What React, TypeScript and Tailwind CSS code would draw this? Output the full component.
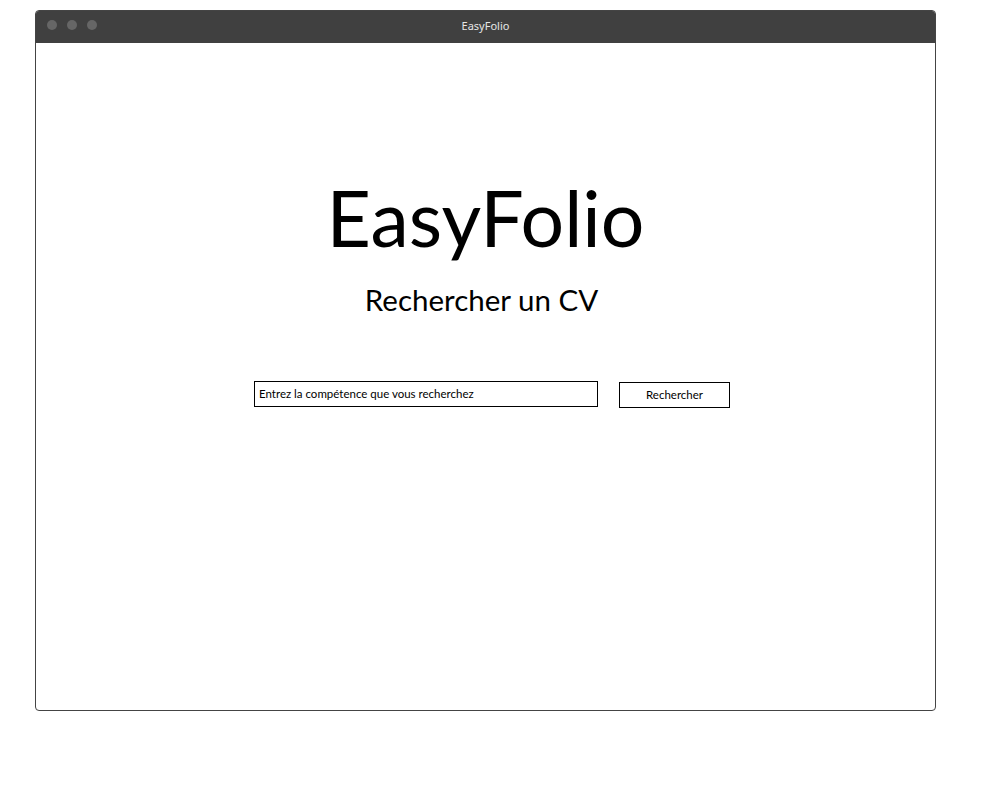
import React from 'react';

const TitleBar: React.FC = () => (
  <div className="relative flex h-[32px] items-center bg-[#404040]">
    <div className="flex gap-[10px] pl-[11px] pb-[4px]">
      <span className="h-[10px] w-[10px] rounded-full bg-[#666666]" />
      <span className="h-[10px] w-[10px] rounded-full bg-[#666666]" />
      <span className="h-[10px] w-[10px] rounded-full bg-[#666666]" />
    </div>
    <div className="absolute inset-0 flex items-center justify-center pb-[2px] text-[11px] text-[#e6e6e6] [font-family:'Noto_Sans',sans-serif]">
      EasyFolio
    </div>
  </div>
);

export default function App() {
  return (
    <div className="h-[810px] w-[1000px] bg-white pl-[35px] pt-[10px] [font-family:Lato,'Noto_Sans',sans-serif]">
      <div className="flex h-[701px] w-[901px] flex-col overflow-hidden rounded-[4px] border border-[#444444]">
        <TitleBar />
        <div className="flex flex-1 flex-col items-center pt-[136px]">
          <h1 className="text-[77px] leading-none text-black">EasyFolio</h1>
          <h2 className="mt-[29px] pr-[8px] text-[29.5px] leading-none text-black">Rechercher un CV</h2>
          <div className="mt-[66px] flex items-start gap-[21px] pl-[13px]">
            <input
              type="text"
              defaultValue="Entrez la compétence que vous recherchez"
              className="h-[26px] w-[344px] border border-black px-[4px] text-[11.5px] text-black outline-none"
            />
            <button className="mt-[1px] h-[26px] w-[111px] border border-black bg-white text-[11.5px] text-black">
              Rechercher
            </button>
          </div>
        </div>
      </div>
    </div>
  );
}
